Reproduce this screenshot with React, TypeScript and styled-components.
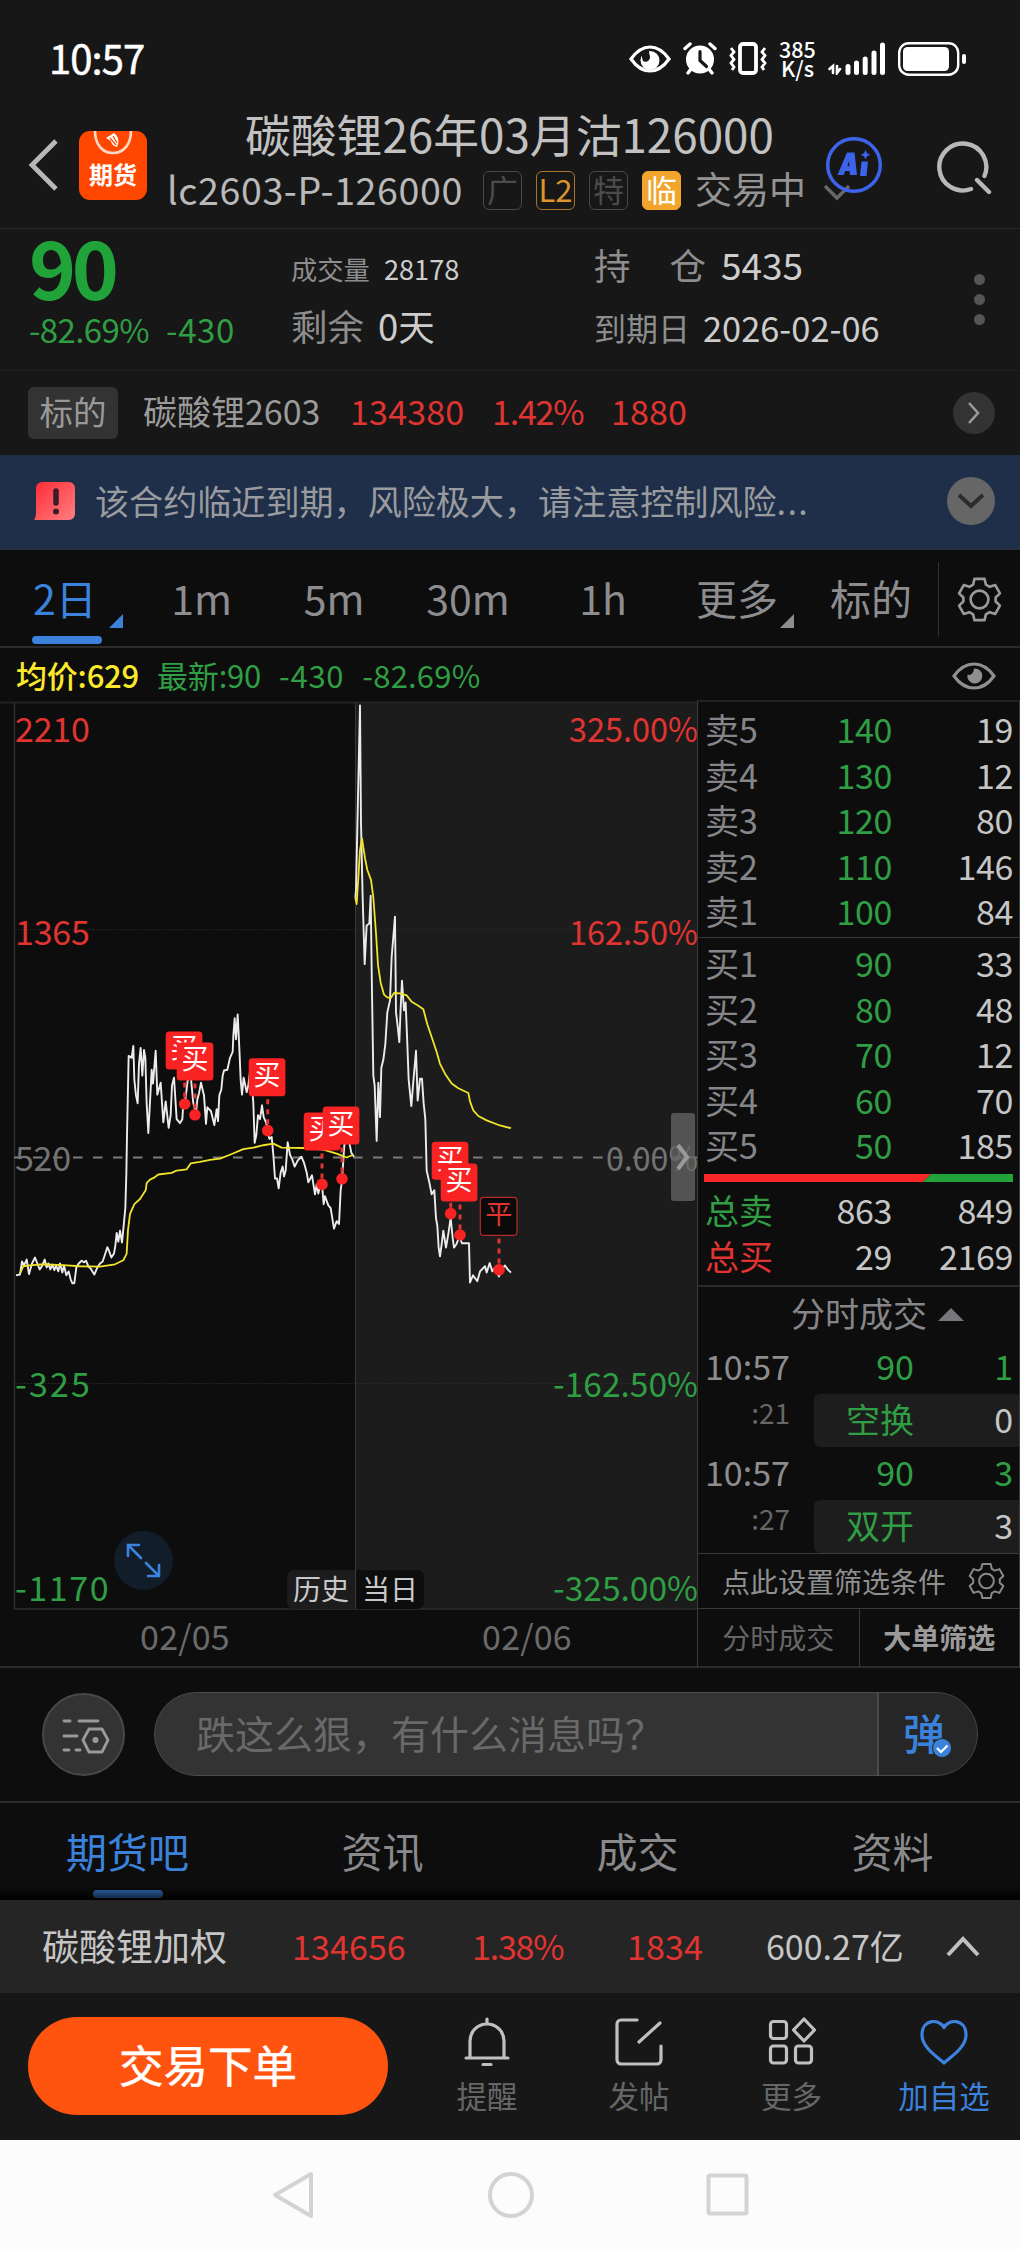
import React from "react";
import styled, { createGlobalStyle } from "styled-components";

const c = {
  bg: "#171717",
  panel: "#0d0d0d",
  line: "#2b2b2b",
  text: "#c6c6c6",
  dim: "#949494",
  faint: "#666666",
  red: "#e03431",
  hot: "#f92323",
  green: "#2f9e44",
  blue: "#3b82dc",
};

const Global = createGlobalStyle`
  body { margin: 0; background: ${c.bg}; }
  * { box-sizing: border-box; }
  svg { display: block; flex: none; }
`;

const Page = styled.div`
  width: 1020px;
  height: 2250px;
  overflow: hidden;
  display: flex;
  flex-direction: column;
  background: ${c.bg};
  color: ${c.text};
  font-family: "Noto Sans CJK SC", sans-serif;
  white-space: pre;
  line-height: 1;
`;

/* ---------- status bar ---------- */
const StatusBar = styled.div`
  height: 112px;
  padding: 6px 53px 0 49px;
  display: flex;
  align-items: center;
  color: #fff;
`;
const Clock = styled.div`
  flex: 1;
  margin-top: -3px;
  font-size: 40px;
  font-weight: 400;
  letter-spacing: -0.9px;
  -webkit-text-stroke: 0.5px #fff;
`;
const StatusIcons = styled.div`
  display: flex;
  align-items: center;
  gap: 12px;
`;
const Speed = styled.div`
  width: 37px;
  margin: -1px 0 0 0;
  font-size: 21.5px;
  font-weight: 500;
  line-height: 19px;
  text-align: center;
`;

/* ---------- header ---------- */
const Header = styled.header`
  height: 117px;
  border-bottom: 1px solid #292929;
  display: grid;
  grid-template-columns: 79px 68px 1fr 60px 137px;
  padding-bottom: 10px;
`;
const BackCell = styled.div`
  padding: 26px 0 0 27px;
`;
const Logo = styled.div`
  height: 69px;
  margin-top: 19px;
  border-radius: 11px;
  background: #ff4700;
  color: #fff;
  display: flex;
  flex-direction: column;
  align-items: center;
  font-size: 24px;
  font-weight: 700;
`;
const LogoText = styled.span`
  margin-top: 7px;
`;
const TitleCell = styled.div`
  padding-left: 20px;
`;
const Title = styled.h1`
  margin: 0;
  padding-left: 78px;
  height: 56px;
  font-size: 45.8px;
  line-height: 43px;
  font-weight: 400;
  color: #c2c2c2;
`;
const SubTitle = styled.div`
  display: flex;
  align-items: center;
  height: 46px;
`;
const Code = styled.span`
  width: 316px;
  margin-top: -5px;
  font-size: 37.6px;
  letter-spacing: 0.6px;
  color: #b9b9b9;
`;
const Badge = styled.span<{ $fg: string; $line: string; $bg?: string }>`
  width: 39px;
  height: 39px;
  margin-right: 14px;
  border: 1.5px solid ${(p) => p.$line};
  border-radius: 6px;
  background: ${(p) => p.$bg ?? "transparent"};
  color: ${(p) => p.$fg};
  font-size: 31px;
  line-height: 34px;
  display: flex;
  justify-content: center;
`;
const Phase = styled.span`
  margin-top: -4px;
  font-size: 37px;
  color: ${c.dim};
`;
const AiCell = styled.div`
  padding-top: 25px;
`;
const SearchCell = styled.div`
  padding: 25px 0 0 54px;
`;

/* ---------- quote ---------- */
const Quote = styled.section`
  height: 142px;
  border-bottom: 1px solid #212121;
  display: grid;
  grid-template-columns: 262px 303px 380px 1fr;
  padding-left: 29px;
`;
const Big = styled.div`
  margin-top: -3px;
  height: 78px;
  font-size: 80px;
  line-height: 78px;
  font-weight: 700;
  letter-spacing: -4.5px;
  color: #20a43a;
`;
const Change = styled.div`
  margin-top: 7px;
  display: flex;
  gap: 17px;
  font-size: 33px;
  letter-spacing: -0.6px;
  line-height: 36px;
  color: ${c.green};
`;
const ChangeValue = styled.span`
  letter-spacing: 0.6px;
`;
const Fact = styled.div<{ $top: number; $size: number; $gap: number }>`
  margin-top: ${(p) => p.$top}px;
  height: 38px;
  display: flex;
  align-items: center;
  gap: ${(p) => p.$gap}px;
  font-size: ${(p) => p.$size}px;
  color: #8d8d8d;
`;
const FactValue = styled.b<{ $size: number }>`
  font-weight: 400;
  font-size: ${(p) => p.$size}px;
  color: #cdcdcd;
`;
const SpacedName = styled.span`
  width: 112px;
  display: flex;
  justify-content: space-between;
`;
const Dots = styled.div`
  display: flex;
  flex-direction: column;
  gap: 9px;
  padding: 45px 0 0 0;
`;
const Dot = styled.i`
  width: 11px;
  height: 11px;
  border-radius: 50%;
  background: #555;
`;

/* ---------- underlying ---------- */
const Underlying = styled.section`
  height: 84px;
  padding: 0 25px 0 28px;
  display: flex;
  align-items: center;
  font-size: 34px;
  color: ${c.red};
`;
const Tag = styled.span`
  width: 90px;
  height: 52px;
  margin-right: 25px;
  border-radius: 6px;
  background: #333;
  color: #999;
  font-size: 33.500px;
  line-height: 47px;
  text-align: center;
`;
const UnderlyingName = styled.span`
  width: 207px;
  margin-top: -4px;
  color: #9b9b9b;
`;
const UnderlyingNum = styled.span<{ $w: number; $ls: number }>`
  width: ${(p) => p.$w}px;
  margin-top: -4px;
  letter-spacing: ${(p) => p.$ls}px;
`;
const Round = styled.span<{ $d: number; $bg: string }>`
  width: ${(p) => p.$d}px;
  height: ${(p) => p.$d}px;
  margin-left: auto;
  border-radius: 50%;
  background: ${(p) => p.$bg};
  display: flex;
  align-items: center;
  justify-content: center;
`;

/* ---------- warning ---------- */
const Warning = styled.section`
  height: 95px;
  padding: 0 25px 0 34px;
  display: flex;
  align-items: center;
  background: #1f2f49;
  border-bottom: 2px solid #27303c;
`;
const WarningText = styled.span`
  margin: -2px 0 0 20px;
  font-size: 34.1px;
  color: #999b9f;
`;
const Trailing = styled.span`
  letter-spacing: 1.4px;
`;

/* ---------- period tabs ---------- */
const Periods = styled.nav`
  height: 99px;
  background: ${c.panel};
  border-bottom: 2px solid ${c.line};
  display: grid;
  grid-template-columns: 135px 133px 132px 136px 134px 134px 134px 1fr;
  font-size: 41px;
  color: #8d8d90;
`;
const Period = styled.div<{ $on?: boolean; $left?: boolean }>`
  position: relative;
  display: flex;
  justify-content: ${(p) => (p.$left ? "flex-start" : "center")};
  padding: ${(p) => (p.$left ? "0 0 0 33px" : "0")};
  line-height: 95px;
  color: ${(p) => (p.$on ? c.blue : "inherit")};
`;
const PeriodBar = styled.i`
  position: absolute;
  left: 32px;
  bottom: 2px;
  width: 70px;
  height: 8px;
  border-radius: 4px;
  background: ${c.blue};
`;
const Corner = styled.i<{ $x: number; $c: string }>`
  position: absolute;
  left: ${(p) => p.$x}px;
  top: 64px;
  border-left: 14px solid transparent;
  border-bottom: 14px solid ${(p) => p.$c};
`;
const PeriodSettings = styled.div`
  margin: 12px 0 10px;
  border-left: 1px solid #303030;
  padding: 14px 0 0 18px;
`;

/* ---------- average line ---------- */
const Averages = styled.div`
  height: 52px;
  padding: 0 24px 0 16px;
  display: flex;
  align-items: center;
  gap: 18px;
  background: ${c.panel};
  font-size: 31px;
  color: ${c.green};
`;
const AverageItem = styled.span<{ $yellow?: boolean; $ls?: number }>`
  margin-top: 0;
  letter-spacing: ${(p) => p.$ls ?? -0.2}px;
  ${(p) => (p.$yellow ? "color:#fbe92c;font-weight:500;" : "")}
`;
const EyeSlot = styled.span`
  margin: 3px 0 0 auto;
`;

/* ---------- market ---------- */
const Market = styled.main`
  height: 968px;
  display: grid;
  grid-template-columns: 697px 323px;
  background: ${c.panel};
  border-bottom: 2px solid ${c.line};
`;
const ChartColumn = styled.div`
  position: relative;
`;
const Dates = styled.div`
  height: 56px;
  padding-left: 14px;
  display: grid;
  grid-template-columns: 342px 342px;
  text-align: center;
  font-size: 34px;
  line-height: 50px;
  color: #6a6a6a;
`;
const DateCell = styled.span`
  letter-spacing: 0.2px;
`;
const Expand = styled.div`
  position: absolute;
  left: 114px;
  top: 831px;
  width: 59px;
  height: 59px;
  border-radius: 50%;
  background: #121d2a;
  padding: 12px;
`;
const DayTags = styled.div`
  position: absolute;
  left: 287px;
  top: 870px;
  display: flex;
  gap: 1px;
`;
const DayTag = styled.span<{ $bg: string; $r: string }>`
  width: 68px;
  height: 39px;
  border-radius: ${(p) => p.$r};
  background: ${(p) => p.$bg};
  color: #c8c8c8;
  font-size: 28px;
  line-height: 37px;
  text-align: center;
`;
const Handle = styled.div`
  position: absolute;
  left: 671px;
  top: 413px;
  width: 24px;
  height: 88px;
  border-radius: 3px;
  background: rgba(102, 102, 102, 0.75);
  display: flex;
  align-items: center;
  justify-content: center;
`;

/* ---------- order book ---------- */
const Book = styled.aside`
  border-top: 2px solid #222;
  border-left: 1px solid #3a3a3a;
  border-right: 1px solid #3a3a3a;
  display: flex;
  flex-direction: column;
  font-size: 34px;
`;
const Levels = styled.div<{ $top: number; $h: number; $line?: boolean }>`
  height: ${(p) => p.$h}px;
  padding: ${(p) => p.$top}px 6px 0 7px;
  ${(p) => (p.$line ? "border-bottom: 1.5px solid #3a3a3a;" : "")}
`;
const Level = styled.div`
  height: 45.5px;
  line-height: 45.5px;
  display: grid;
  grid-template-columns: 70px 117px 1fr;
  text-align: right;
`;
const LevelName = styled.span<{ $c: string }>`
  text-align: left;
  color: ${(p) => p.$c};
`;
const LevelNum = styled.span<{ $c: string }>`
  letter-spacing: -0.4px;
  color: ${(p) => p.$c};
`;
const TicksTitle = styled.div`
  height: 56px;
  border-top: 2px solid #2b2b2b;
  padding: 0 0 0 93px;
  display: flex;
  align-items: center;
  gap: 11px;
  color: #86868a;
  line-height: 50px;
`;
const TicksName = styled.span`
  margin-top: -2px;
`;
const Tick = styled.div`
  height: 106px;
  display: grid;
  grid-template-columns: 116px 1fr;
`;
const TickTime = styled.div`
  padding-left: 7px;
  line-height: 49px;
  color: #8d8d90;
`;
const TickSeconds = styled.div`
  padding-right: 24px;
  font-size: 28px;
  line-height: 44px;
  text-align: right;
  color: ${c.faint};
`;
const TickRow = styled.div<{ $boxed?: boolean }>`
  height: 53px;
  display: grid;
  grid-template-columns: 100px 1fr;
  padding-right: 6px;
  line-height: 49px;
  text-align: right;
  color: ${c.green};
  border-radius: 6px 0 0 6px;
  background: ${(p) => (p.$boxed ? "#1d1d1d" : "transparent")};
`;
const Lots = styled.span<{ $plain?: boolean }>`
  color: ${(p) => (p.$plain ? c.text : c.green)};
`;
const Filter = styled.div`
  height: 56px;
  border-top: 1px solid #3a3a3a;
  border-bottom: 1px solid #3a3a3a;
  padding: 0 14px 0 24px;
  display: flex;
  align-items: center;
  justify-content: space-between;
  font-size: 28px;
  line-height: 48px;
  color: #8f8f8f;
`;
const BookTabs = styled.div`
  flex: 1;
  display: grid;
  grid-template-columns: 1fr 1fr;
  font-size: 28px;
  line-height: 56px;
  text-align: center;
`;
const BookTab = styled.span<{ $on?: boolean }>`
  ${(p) =>
    p.$on
      ? "color:#9b9b9b;font-weight:700;border-left:1px solid #3a3a3a;"
      : `color:${c.faint};`}
`;

/* ---------- comment ---------- */
const Comment = styled.section`
  height: 135px;
  padding: 0 42px 1px;
  display: flex;
  align-items: center;
  background: ${c.panel};
  border-bottom: 2px solid ${c.line};
`;
const Settings = styled.div`
  width: 83px;
  height: 83px;
  border: 2px solid #484848;
  border-radius: 50%;
  background: #333;
  padding: 23px 0 0 18px;
`;
const Field = styled.div`
  width: 824px;
  height: 84px;
  margin-left: 29px;
  border: 1.5px solid #4a4a4a;
  border-radius: 42px;
  overflow: hidden;
  display: grid;
  grid-template-columns: 722px 1fr;
  background: #333;
`;
const Placeholder = styled.span`
  padding-left: 41px;
  font-size: 39px;
  line-height: 78px;
  color: #696969;
`;
const Danmu = styled.div`
  position: relative;
  border-left: 2px solid #4a4a4a;
  background: #262626;
  padding-left: 24px;
  font-size: 42px;
  font-weight: 500;
  line-height: 78px;
  color: ${c.blue};
`;
const Check = styled.div`
  position: absolute;
  left: 53px;
  top: 45px;
`;

/* ---------- section tabs ---------- */
const Sections = styled.nav`
  height: 97px;
  display: grid;
  grid-template-columns: repeat(4, 1fr);
  background: linear-gradient(${c.panel} 86%, #000 100%);
  font-size: 41px;
  line-height: 95px;
  text-align: center;
  color: #8a8a8d;
`;
const Section = styled.div<{ $on?: boolean }>`
  position: relative;
  color: ${(p) => (p.$on ? c.blue : "inherit")};
`;
const SectionBar = styled.i`
  position: absolute;
  left: 93px;
  bottom: 2px;
  width: 70px;
  height: 8px;
  border-radius: 4px;
  background: linear-gradient(#27588f, #12294a);
`;

/* ---------- index strip ---------- */
const IndexStrip = styled.section`
  height: 93px;
  padding: 0 38px 2px 42px;
  display: grid;
  grid-template-columns: 250px 180px 155px 139px 1fr 36px;
  align-items: center;
  background: #252525;
  font-size: 34px;
  color: ${c.red};
`;
const IndexName = styled.span`
  font-size: 37px;
  color: ${c.text};
`;
const IndexNum = styled.span<{ $ls: number }>`
  letter-spacing: ${(p) => p.$ls}px;
`;
const Turnover = styled.span`
  color: ${c.text};
`;

/* ---------- actions ---------- */
const Actions = styled.footer`
  height: 147px;
  padding: 24px 0 0 28px;
  display: grid;
  grid-template-columns: 383px 152px 152px 153px 152px;
`;
const Trade = styled.button`
  width: 360px;
  height: 98px;
  border: 0;
  border-radius: 49px;
  background: #ff540f;
  color: #fff;
  font-family: inherit;
  font-size: 44.5px;
  line-height: 94px;
  font-weight: 400;
  -webkit-text-stroke: 0.5px #fff;
  padding: 0 0 4px;
`;
const Action = styled.div<{ $on?: boolean }>`
  display: flex;
  flex-direction: column;
  align-items: center;
  font-size: 30.5px;
  line-height: 40px;
  color: ${(p) => (p.$on ? c.blue : c.faint)};
`;
const ActionLabel = styled.span`
  margin-top: 8px;
`;

const SystemNav = styled.div`
  height: 110px;
  background: #fcfcfc;
  display: flex;
  align-items: center;
  justify-content: space-between;
  padding: 0 269px 0 270px;
`;

/* ---------- icons ---------- */
const gearPath =
  "M16.6 2h10.8l1.4 6.2 4 2.3 6-1.9 5 8.9-4.6 4.3v4.4l4.6 4.3-5 8.9-6-1.9-4 2.3-1.4 6.2H16.6l-1.4-6.2-4-2.3-6 1.9-5-8.9 4.6-4.3v-4.4L.2 17.500l5-8.900 6 1.900 4-2.300z";

const Gear = ({ w, h, color, sw }: { w: number; h: number; color: string; sw: number }) => (
  <svg width={w} height={h} viewBox="-2 0 48 48" fill="none" stroke={color} strokeWidth={sw} strokeLinejoin="round">
    <path d={gearPath} />
    <circle cx="22" cy="24" r="9.500" />
  </svg>
);

const StatusEye = () => (
  <svg width="42" height="28" viewBox="0 0 42 28">
    <path d="M2 14C8 5.500 14 2 21 2s13 3.500 19 12c-6 8.500-12 12-19 12S8 22.500 2 14z" fill="none" stroke="#fff" strokeWidth="3.200" />
    <circle cx="21" cy="15.500" r="9.500" fill="#fff" />
    <path d="M12 9l9-5c-2 4 0 5 0 8 0 4-4 6-7 4z" fill={c.bg} />
  </svg>
);

const Alarm = () => (
  <svg width="34" height="33" viewBox="0 0 34 33" fill="none" stroke="#fff" strokeWidth="3.400" strokeLinecap="round">
    <circle cx="17" cy="17.500" r="14" fill="#fff" stroke="none" />
    <path d="M2 6.500L7 2M32 6.500L27 2M8 27l-3 4M26 27l3 4" />
    <path d="M17 9.500v9l6.500 6" stroke={c.bg} strokeWidth="3.200" />
  </svg>
);

const Vibrate = () => (
  <svg width="38" height="33" viewBox="0 0 38 33" fill="none" stroke="#fff">
    <rect x="11" y="2" width="16" height="29" rx="3" strokeWidth="3.800" />
    <path d="M2 6l3 4-3 3.500 3 4L2 21l3 4-2 3M36 6l-3 4 3 3.500-3 4 3 3.500-3 4 2 3" strokeWidth="2.800" />
  </svg>
);

const Signal = () => (
  <svg width="58" height="33" viewBox="0 0 58 33" fill="none" stroke="#fff" strokeLinecap="round">
    <path d="M1.500 27L5 24v7M9 24v7l3-4" strokeWidth="2.600" />
    <path d="M20 24.500v6M28.500 21v9.500M37.200 17v13.500M46 11v19.500M54.500 3v27.500" strokeWidth="5" />
  </svg>
);

const Battery = () => (
  <svg width="69" height="34" viewBox="0 0 69 34">
    <rect x="1.200" y="1.200" width="59" height="31.500" rx="9.500" fill="none" stroke="#fff" strokeWidth="2.400" />
    <rect x="5" y="5" width="46" height="24" rx="4.500" fill="#fff" />
    <rect x="64" y="12" width="4" height="10" rx="2" fill="#fff" />
  </svg>
);

const Eye = () => (
  <svg width="44" height="28" viewBox="0 0 44 28">
    <path d="M2 14C8 5.500 15 2 22 2s14 3.500 20 12c-6 8.500-13 12-20 12S8 22.500 2 14z" fill="none" stroke="#8f8f8f" strokeWidth="3.200" />
    <path d="M22 6.500a7.500 7.500 0 1 1-6.500 6c3 1.500 6-1 6.500-6z" fill="#8f8f8f" />
  </svg>
);

/* ---------- chart data: samples on a 2100 x 2300 plotting grid ---------- */
const price =
  "48,1455 60,1453 66,1420 72,1430 80,1415 87,1452 96,1425 105,1410 112,1425 119,1440 127,1430 134,1415 140,1435 145,1425 151,1440 157,1428 163,1442 168,1430 175,1445 180,1425 187,1448 192,1430 199,1455 206,1445 212,1465 217,1475 223,1475 229,1435 236,1425 245,1418 252,1422 258,1418 265,1432 272,1438 283,1453 292,1435 300,1425 308,1420 314,1405 322,1384 328,1395 334,1410 342,1400 346,1380 350,1348 355,1370 360,1342 366,1372 371,1330 376,1285 379,1200 381,1100 386,900 395,905 400,875 403,960 408,1000 413,1020 417,920 422,880 427,950 432,885 436,905 440,1020 445,1095 452,985 455,935 459,970 467,887 472,998 482,968 490,1068 497,1015 506,1082 512,1050 516,975 522,955 530,1060 540,1070 547,1060 550,1020 556,1010 565,950 572,950 580,1020 588,1045 592,1010 597,995 603,968 612,1000 618,1072 622,1030 633,1040 643,1075 650,1035 654,1065 658,1000 664,985 668,950 672,937 682,935 690,905 698,890 700,850 704,805 708,858 713,795 718,880 722,960 726,998 731,955 740,992 745,975 750,940 757,985 760,1020 764,1120 769,1100 774,1050 780,1060 786,1025 791,1055 799,1070 803,1090 808,1110 815,1105 820,1150 825,1210 831,1210 836,1235 842,1195 848,1180 852,1205 857,1190 863,1118 870,1150 877,1162 884,1180 893,1165 904,1155 912,1170 920,1195 925,1220 936,1202 945,1250 950,1225 955,1248 960,1230 966,1225 971,1275 975,1255 985,1278 992,1285 1002,1337 1010,1318 1017,1325 1022,1240 1026,1215 1033,1125 1040,1115 1048,1120 1054,1145 1062,1155";
const average =
  "60,1450 70,1432 90,1430 130,1427 200,1430 240,1432 300,1433 345,1427 370,1417 380,1400 384,1340 390,1300 403,1275 420,1262 437,1240 440,1222 450,1213 462,1208 475,1200 515,1196 530,1190 560,1187 572,1172 600,1168 630,1163 660,1160 690,1150 730,1136 760,1132 790,1126 820,1122 845,1132 910,1133 970,1137 1010,1147 1040,1157 1060,1150";
const priceToday =
  "46,500 48,480 60,14 63,310 68,500 74,668 80,570 88,565 92,495 96,740 100,950 104,975 110,1115 115,968 120,1055 124,930 130,910 136,870 142,790 150,760 155,650 165,548 168,790 173,825 178,865 182,780 186,710 192,785 197,765 202,870 206,960 214,1027 220,965 228,887 233,1013 240,958 246,958 251,1020 256,1060 260,1190 268,1220 275,1250 283,1240 288,1310 292,1330 296,1385 300,1407 306,1370 310,1342 318,1385 325,1350 332,1310 338,1360 342,1385 350,1375 358,1357 366,1374 387,1374 390,1473 399,1455 412,1470 420,1445 435,1432 440,1448 449,1424 457,1445 465,1435 477,1458 485,1440 495,1430 503,1440 513,1448";
const averageToday =
  "46,500 50,516 55,450 60,380 66,350 75,400 82,430 93,455 100,500 108,590 114,670 122,715 132,745 142,752 152,754 162,741 180,742 200,747 215,763 235,773 250,782 262,820 278,860 290,890 300,920 315,945 335,970 355,982 385,994 390,1015 400,1038 415,1052 440,1063 480,1076 513,1083";

const Curve = ({ points, color, w }: { points: string; color: string; w: number }) => (
  <polyline points={points} fill="none" stroke={color} strokeWidth={w} strokeLinejoin="round" vectorEffect="non-scaling-stroke" />
);

/* box left, box top, dot x, dot y */
const marks: { b: [number, number]; d: [number, number]; close?: boolean }[] = [
  { b: [165.7, 331.4], d: [184.7, 404] },
  { b: [176.7, 342.4], d: [195, 414.800] },
  { b: [248.7, 358.2], d: [267.7, 430.600] },
  { b: [303.7, 412.4], d: [322, 484.400] },
  { b: [322.7, 406.500], d: [342, 478.800] },
  { b: [431.7, 441.700], d: [450.700, 513.600] },
  { b: [440.700, 463.400], d: [460, 535] },
  { b: [480.300, 497.400], d: [499, 569.800], close: true },
];

const ChartText = styled.text`
  font-family: "Noto Sans CJK SC", sans-serif;
  font-size: 34px;
`;
const MarkText = styled.text`
  font-family: "Noto Sans CJK SC", sans-serif;
  font-size: 27px;
`;

/* left label, right label, baseline, colour, width of the right label */
const axis: [string, string, number, string, number][] = [
  ["2210", "325.00%", 41.5, c.red, 129],
  ["1365", "162.50%", 245, c.red, 129],
  ["520", "0.00%", 471, "#737373", 92],
  ["-325", "-162.50%", 697, c.green, 145],
  ["-1170", "-325.00%", 901, c.green, 145],
];

const Chart = () => (
  <svg width="697" height="911" viewBox="0 0 697 911">
    <rect x="356" y="3" width="341" height="906" fill="#1c1c1c" />
    <path d="M0 2.500H697" stroke="#222" strokeWidth="2" />
    <path d="M14.500 3V909H697" stroke="#2c2c2c" strokeWidth="1.500" fill="none" />
    <path d="M355.500 3V909" stroke="#3a3a3a" strokeWidth="1" />
    <path d="M15 229.700H697M15 683.500H697" stroke="#2a2a2a" strokeDasharray="1.500 1.500" />
    <path d="M14 457.500H697" stroke="#7c7c7c" strokeWidth="1.800" strokeDasharray="9.500 10.500" strokeDashoffset="1" />
    <g transform="scale(0.33333 0.39542)">
      <Curve points={price} color="#ececec" w={1.9} />
      <Curve points={average} color="#f1e42b" w={1.8} />
      <g transform="translate(1020 0)">
        <Curve points={priceToday} color="#ececec" w={1.9} />
        <Curve points={averageToday} color="#f1e42b" w={1.8} />
      </g>
    </g>
    {axis.map(([left, right, y, color, w]) => (
      <g key={left} fill={color}>
        <ChartText x="15" y={y} textLength={left === "520" ? 56 : left.length * 18.7} lengthAdjust="spacing">{left}</ChartText>
        <ChartText x={698 - w} y={y} textLength={w} lengthAdjust="spacingAndGlyphs">{right}</ChartText>
      </g>
    ))}
    {marks.map(({ b, d, close }, i) => (
      <g key={i}>
        <path d={`M${d[0]} ${b[1] + 41}V${d[1]}`} stroke={c.red} strokeWidth="3" strokeDasharray="5 5" />
        <circle cx={d[0]} cy={d[1]} r="5.800" fill={c.hot} />
        <rect x={b[0]} y={b[1]} width="36.700" height="38" rx="3.500" fill={close ? "#0b0b0b" : c.hot} stroke={close ? "#b52a2a" : "none"} strokeWidth="1.200" />
        <MarkText x={b[0] + 18.4} y={b[1] + 27} textAnchor="middle" fill={close ? c.red : "#fff"}>{close ? "平" : "买"}</MarkText>
      </g>
    ))}
  </svg>
);

const asks = [["卖5", "140", "19"], ["卖4", "130", "12"], ["卖3", "120", "80"], ["卖2", "110", "146"], ["卖1", "100", "84"]];
const bids = [["买1", "90", "33"], ["买2", "80", "48"], ["买3", "70", "12"], ["买4", "60", "70"], ["买5", "50", "185"]];
const ticks = [["10:57", ":21", "90", "1", "空换", "0"], ["10:57", ":27", "90", "3", "双开", "3"]];

const Rows = ({ rows }: { rows: string[][] }) => (
  <>
    {rows.map(([n, p, v]) => (
      <Level key={n}>
        <LevelName $c="#86868a">{n}</LevelName>
        <LevelNum $c={c.green}>{p}</LevelNum>
        <LevelNum $c={c.text}>{v}</LevelNum>
      </Level>
    ))}
  </>
);

export default function App() {
  return (
    <Page>
      <Global />
      <StatusBar>
        <Clock>10:57</Clock>
        <StatusIcons>
          <StatusEye />
          <Alarm />
          <Vibrate />
          <Speed>{"385\nK/s"}</Speed>
          <Signal />
          <Battery />
        </StatusIcons>
      </StatusBar>

      <Header>
        <BackCell>
          <svg width="32" height="54" viewBox="0 0 32 54" fill="none" stroke="#b8b8b8" strokeWidth="4.800">
            <path d="M29 3L5 27l24 24" />
          </svg>
        </BackCell>
        <Logo>
          <svg width="40" height="24" viewBox="0 0 40 24">
            <path d="M2 0c0 13 7 22 18 22S38 13 38 0" fill="none" stroke="#ffd9c8" strokeWidth="2.600" />
            <path d="M13 7l8-5c4 3 6 8 3 14-4-1-6-4-6-6l-5-3z" fill="#fff" />
            <path d="M17 7l6 7M20 5l4 7" stroke="#ff4700" strokeWidth="1.200" />
          </svg>
          <LogoText>期货</LogoText>
        </Logo>
        <TitleCell>
          <Title>碳酸锂26年03月沽126000</Title>
          <SubTitle>
            <Code>lc2603-P-126000</Code>
            <Badge $fg="#4c4c4c" $line="#4a4a4a">广</Badge>
            <Badge $fg="#dc952b" $line="#a8732a">L2</Badge>
            <Badge $fg="#4c4c4c" $line="#4a4a4a">特</Badge>
            <Badge $fg="#fff" $line="#f2a52c" $bg="#f2a52c">临</Badge>
            <Phase>交易中</Phase>
          </SubTitle>
        </TitleCell>
        <AiCell>
          <svg width="64" height="66" viewBox="0 0 64 66" fill="none">
            <path d="M2 49l12 12 12-12" stroke="#686868" strokeWidth="3.400" />
            <circle cx="31" cy="28" r="26.300" stroke="#3d63ea" strokeWidth="3.500" />
            <path d="M14.500 38L24 15.500h7.500L34 38h-7l-.4-4h-4.400l-1.500 4zM24.300 29h2.200l-.4-5z" fill="#3d63ea" fillRule="evenodd" />
            <path d="M38.500 24.500h6.500L43.500 39H37z" fill="#3d63ea" />
            <path d="M42.500 13l1.500 3.200 3.300 1.500-3.300 1.500-1.500 3.300-1.500-3.300-3.300-1.500 3.300-1.500z" fill="#3d63ea" />
          </svg>
        </AiCell>
        <SearchCell>
          <svg width="56" height="58" viewBox="0 0 56 58" fill="none" stroke="#b8b8b8" strokeWidth="4.400" strokeLinecap="round">
            <path d="M34 52A23.500 23.500 0 1 1 47.500 39" />
            <path d="M40 43l12 12" />
          </svg>
        </SearchCell>
      </Header>

      <Quote>
        <div>
          <Big>90</Big>
          <Change><span>-82.69%</span><ChangeValue>-430</ChangeValue></Change>
        </div>
        <div>
          <Fact $top={21} $size={26.3} $gap={14}>成交量<FactValue $size={27.2}>28178</FactValue></Fact>
          <Fact $top={19} $size={36.5} $gap={14}>剩余<FactValue $size={36.5}>0天</FactValue></Fact>
        </div>
        <div>
          <Fact $top={17} $size={36.5} $gap={15}><SpacedName><span>持</span><span>仓</span></SpacedName><FactValue $size={37}>5435</FactValue></Fact>
          <Fact $top={24} $size={32} $gap={13}>到期日<FactValue $size={34.4}>2026-02-06</FactValue></Fact>
        </div>
        <Dots><Dot /><Dot /><Dot /></Dots>
      </Quote>

      <Underlying>
        <Tag>标的</Tag>
        <UnderlyingName>碳酸锂2603</UnderlyingName>
        <UnderlyingNum $w={142} $ls={0.2}>134380</UnderlyingNum>
        <UnderlyingNum $w={119} $ls={-1.2}>1.42%</UnderlyingNum>
        <UnderlyingNum $w={80} $ls={0.1}>1880</UnderlyingNum>
        <Round $d={42} $bg="#333">
          <svg width="14" height="24" viewBox="0 0 14 24" fill="none" stroke="#9a9a9a" strokeWidth="2.600">
            <path d="M2 2l9 10-9 10" />
          </svg>
        </Round>
      </Underlying>

      <Warning>
        <svg width="41" height="40" viewBox="0 0 41 40">
          <defs>
            <linearGradient id="alert" x1="0" y1="0" x2="1" y2="1">
              <stop offset="0" stopColor="#ff2a35" />
              <stop offset="1" stopColor="#ff8080" />
            </linearGradient>
          </defs>
          <path d="M8 1h27a6 6 0 0 1 6 6v26a6 6 0 0 1-6 6H0c2-3 2-6 2-10V7a6 6 0 0 1 6-6z" fill="url(#alert)" />
          <path d="M22 10v12" stroke="#3a1c2a" strokeWidth="5.500" strokeLinecap="round" />
          <circle cx="22" cy="30.500" r="3" fill="#3a1c2a" />
        </svg>
        <WarningText>该合约临近到期，风险极大，请注意控制风险<Trailing>...</Trailing></WarningText>
        <Round $d={48} $bg="#666">
          <svg width="28" height="18" viewBox="0 0 28 18" fill="none" stroke="#2c2c2c" strokeWidth="4">
            <path d="M2 3l12 11L26 3" />
          </svg>
        </Round>
      </Warning>

      <Periods>
        <Period $on $left>2日<Corner $x={109} $c={c.blue} /><PeriodBar /></Period>
        <Period>1m</Period>
        <Period>5m</Period>
        <Period>30m</Period>
        <Period>1h</Period>
        <Period>更多<Corner $x={110} $c="#8d8d90" /></Period>
        <Period>标的</Period>
        <PeriodSettings><Gear w={45} h={47} color="#9a9a9a" sw={2.8} /></PeriodSettings>
      </Periods>

      <Averages>
        <AverageItem $yellow>均价:629</AverageItem>
        <AverageItem>最新:90</AverageItem>
        <AverageItem $ls={0.7}>-430</AverageItem>
        <AverageItem $ls={0.2}>-82.69%</AverageItem>
        <EyeSlot><Eye /></EyeSlot>
      </Averages>

      <Market>
        <ChartColumn>
          <Chart />
          <Dates><DateCell>02/05</DateCell><DateCell>02/06</DateCell></Dates>
          <Expand>
            <svg width="35" height="35" viewBox="0 0 35 35" fill="none" stroke={c.blue} strokeWidth="2.600" strokeLinecap="round">
              <path d="M15 15L2 2M2 13V2h11M20 20l13 13M33 22v11H22" />
            </svg>
          </Expand>
          <DayTags>
            <DayTag $bg="#1c1c1c" $r="7px 0 0 7px">历史</DayTag>
            <DayTag $bg={c.panel} $r="0 7px 7px 0">当日</DayTag>
          </DayTags>
          <Handle>
            <svg width="14" height="28" viewBox="0 0 14 28" fill="none" stroke="#9a9a9a" strokeWidth="4">
              <path d="M2 2l9 12-9 12" />
            </svg>
          </Handle>
        </ChartColumn>

        <Book>
          <Levels $top={4} $h={236} $line><Rows rows={asks} /></Levels>
          <Levels $top={2} $h={236}><Rows rows={bids} /></Levels>
          <svg width="315" height="8" viewBox="0 0 315 8">
            <path d="M6 0h227l-8 8H6z" fill="#fa2626" />
            <path d="M233 0h82v8h-90z" fill="#20a43a" />
          </svg>
          <Levels $top={5} $h={103}>
            <Level>
              <LevelName $c={c.green}>总卖</LevelName>
              <LevelNum $c={c.text}>863</LevelNum>
              <LevelNum $c={c.text}>849</LevelNum>
            </Level>
            <Level>
              <LevelName $c={c.red}>总买</LevelName>
              <LevelNum $c={c.text}>29</LevelNum>
              <LevelNum $c={c.text}>2169</LevelNum>
            </Level>
          </Levels>
          <TicksTitle>
            <TicksName>分时成交</TicksName>
            <svg width="26" height="13" viewBox="0 0 26 13"><path d="M13 0l13 13H0z" fill="#77777b" /></svg>
          </TicksTitle>
          {ticks.map(([t, s, p, v, kind, n]) => (
            <Tick key={s}>
              <div>
                <TickTime>{t}</TickTime>
                <TickSeconds>{s}</TickSeconds>
              </div>
              <div>
                <TickRow><span>{p}</span><Lots>{v}</Lots></TickRow>
                <TickRow $boxed><span>{kind}</span><Lots $plain>{n}</Lots></TickRow>
              </div>
            </Tick>
          ))}
          <Filter>点此设置筛选条件<Gear w={37} h={40} color="#8a8a8a" sw={2.6} /></Filter>
          <BookTabs><BookTab>分时成交</BookTab><BookTab $on>大单筛选</BookTab></BookTabs>
        </Book>
      </Market>

      <Comment>
        <Settings>
          <svg width="48" height="36" viewBox="0 0 48 36" fill="none" stroke="#9a9a9a" strokeWidth="2.800" strokeLinecap="round">
            <path d="M2 3h6M17 3h19M2 18h13M2 32h5M14 32h4" />
            <path d="M27 11h13l6 11-6 12H27l-6-12z" strokeLinejoin="round" />
            <circle cx="33.500" cy="22" r="1.600" />
          </svg>
        </Settings>
        <Field>
          <Placeholder>跌这么狠，有什么消息吗？</Placeholder>
          <Danmu>
            弹
            <Check>
              <svg width="20" height="20" viewBox="0 0 20 20" fill="none">
                <circle cx="10" cy="10" r="9.500" fill="#3b82dc" stroke="#262626" />
                <path d="M5 10l4 4 6.500-6.500" stroke="#fff" strokeWidth="2.200" />
              </svg>
            </Check>
          </Danmu>
        </Field>
      </Comment>

      <Sections>
        <Section $on>期货吧<SectionBar /></Section>
        <Section>资讯</Section>
        <Section>成交</Section>
        <Section>资料</Section>
      </Sections>

      <IndexStrip>
        <IndexName>碳酸锂加权</IndexName>
        <IndexNum $ls={0.1}>134656</IndexNum>
        <IndexNum $ls={-1.2}>1.38%</IndexNum>
        <IndexNum $ls={0.1}>1834</IndexNum>
        <Turnover>600.27亿</Turnover>
        <svg width="34" height="22" viewBox="0 0 34 22" fill="none" stroke="#c0c0c0" strokeWidth="4">
          <path d="M2 20L17 4l15 16" />
        </svg>
      </IndexStrip>

      <Actions>
        <Trade>交易下单</Trade>
        <Action>
          <svg width="48" height="50" viewBox="0 0 48 50" fill="none" stroke="#c0c0c0" strokeWidth="3.200" strokeLinecap="round">
            <path d="M24 2v4M7 40V24a17 17 0 0 1 34 0v16M3 41h42M20 47.500h8" />
          </svg>
          <ActionLabel>提醒</ActionLabel>
        </Action>
        <Action>
          <svg width="50" height="50" viewBox="0 0 50 50" fill="none" stroke="#c0c0c0" strokeWidth="3.200" strokeLinecap="round">
            <path d="M23 3H7a4 4 0 0 0-4 4v36a4 4 0 0 0 4 4h36a4 4 0 0 0 4-4V29M46 6L25 25" />
          </svg>
          <ActionLabel>发帖</ActionLabel>
        </Action>
        <Action>
          <svg width="50" height="50" viewBox="0 0 50 50" fill="none" stroke="#c0c0c0" strokeWidth="3.200" strokeLinejoin="round">
            <rect x="3.500" y="4.500" width="16" height="17" rx="3" />
            <rect x="3.500" y="29" width="16" height="17" rx="3" />
            <rect x="28.500" y="29" width="16" height="17" rx="3" />
            <path d="M37 2l10.500 11L37 24 26.500 13z" />
          </svg>
          <ActionLabel>更多</ActionLabel>
        </Action>
        <Action $on>
          <svg width="50" height="50" viewBox="0 0 50 50" fill="none" stroke={c.blue} strokeWidth="3.200" strokeLinejoin="round">
            <path d="M25 10.500C21 2 3 1 3 18c0 12 14 21 22 28 8-7 22-16 22-28C47 1 29 2 25 10.500z" />
          </svg>
          <ActionLabel>加自选</ActionLabel>
        </Action>
      </Actions>

      <SystemNav>
        <svg width="46" height="50" viewBox="0 0 46 50" fill="none" stroke="#d3d3d3" strokeWidth="4" strokeLinejoin="round">
          <path d="M41 4v42L5 25z" />
        </svg>
        <svg width="46" height="46" viewBox="0 0 46 46" fill="none" stroke="#d3d3d3" strokeWidth="4">
          <circle cx="23" cy="23" r="21" />
        </svg>
        <svg width="46" height="46" viewBox="0 0 46 46" fill="none" stroke="#d3d3d3" strokeWidth="4">
          <rect x="3.500" y="3.500" width="38" height="38" rx="1.500" />
        </svg>
      </SystemNav>
    </Page>
  );
}
